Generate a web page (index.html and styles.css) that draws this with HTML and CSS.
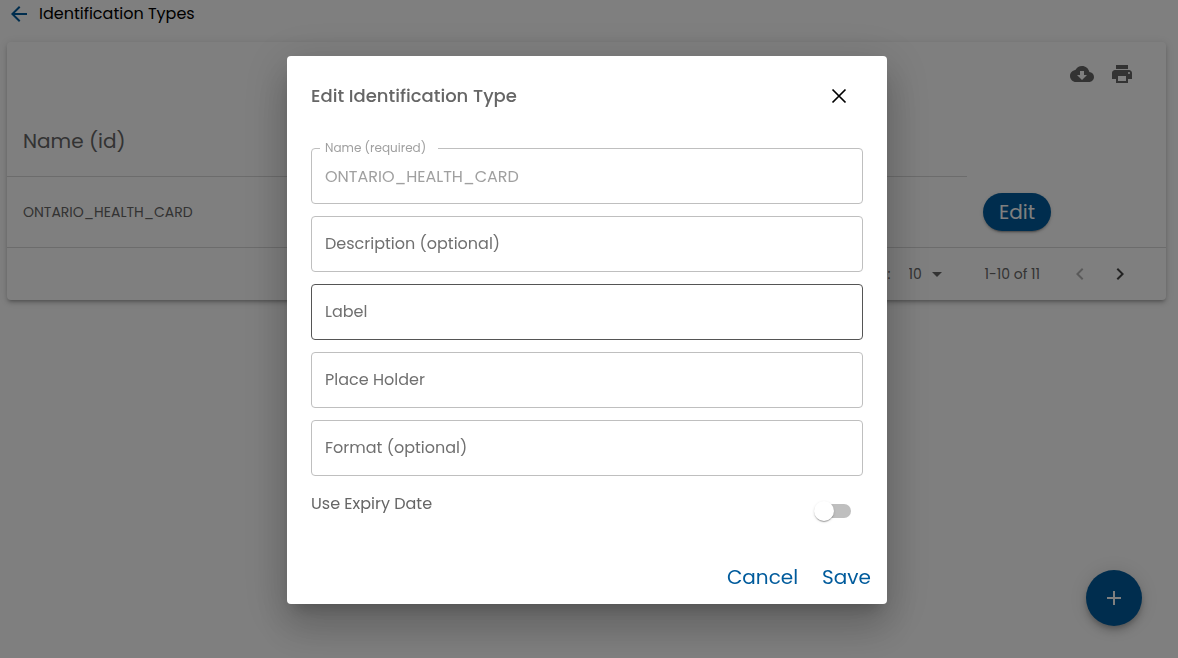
FILE: index.html
```html
<!DOCTYPE html>
<html lang="en">
<head>
<meta charset="utf-8">
<meta name="viewport" content="width=device-width, initial-scale=1">
<title>Identification Types</title>
<link rel="stylesheet" href="styles.css">
</head>
<body>
<header class="page-header">
  <a class="back" href="#" aria-label="Back"><svg class="icon" viewBox="0 0 24 24"><path d="M20 11H7.830l5.590-5.590L12 4l-8 8 8 8 1.410-1.410L7.830 13H20v-2z"/></svg></a>
  <h1 class="page-title">Identification Types</h1>
</header>

<main class="card">
  <div class="toolbar">
    <button class="icon-button" type="button" aria-label="Download"><svg class="icon" viewBox="0 0 24 24"><path d="M19.350 10.040C18.670 6.590 15.640 4 12 4 9.110 4 6.600 5.640 5.350 8.040 2.340 8.360 0 10.910 0 14c0 3.310 2.690 6 6 6h13c2.760 0 5-2.240 5-5 0-2.640-2.050-4.780-4.650-4.960zM17 13l-5 5-5-5h3V9h4v4h3z"/></svg></button>
    <button class="icon-button" type="button" aria-label="Print"><svg class="icon" viewBox="0 0 24 24"><path d="M19 8H5c-1.660 0-3 1.340-3 3v6h4v4h12v-4h4v-6c0-1.660-1.340-3-3-3zm-3 11H8v-5h8v5zm3-7c-.55 0-1-.45-1-1s.45-1 1-1 1 .45 1 1-.45 1-1 1zm-1-9H6v4h12V3z"/></svg></button>
  </div>
  <table class="table">
    <thead>
      <tr><th class="name-head" scope="col">Name (id)</th><td class="action-head"></td></tr>
    </thead>
    <tbody>
      <tr><td>ONTARIO_HEALTH_CARD</td><td><button class="edit-button" type="button">Edit</button></td></tr>
    </tbody>
  </table>
  <div class="pagination">
    <label for="rows">Rows per page:</label>
    <div class="select-wrap">
      <select id="rows" class="rows-select"><option>10</option><option>25</option></select>
      <svg class="icon select-arrow" viewBox="0 0 24 24"><path d="M7 10l5 5 5-5z"/></svg>
    </div>
    <span class="range">1-10 of 11</span>
    <div class="pager">
      <button class="icon-button" type="button" aria-label="Previous page" disabled><svg class="icon" viewBox="0 0 24 24"><path d="M15.410 7.410L14 6l-6 6 6 6 1.410-1.410L10.830 12z"/></svg></button>
      <button class="icon-button" type="button" aria-label="Next page"><svg class="icon" viewBox="0 0 24 24"><path d="M10 6L8.590 7.410 13.170 12l-4.580 4.590L10 18l6-6z"/></svg></button>
    </div>
  </div>
</main>

<button class="fab" type="button" aria-label="Add"><svg class="icon" viewBox="0 0 24 24"><path d="M19 13h-6v6h-2v-6H5v-2h6V5h2v6h6v2z"/></svg></button>

<div class="backdrop">
  <form class="dialog" role="dialog" aria-labelledby="dialog-title">
    <div class="dialog-header">
      <h2 class="dialog-title" id="dialog-title">Edit Identification Type</h2>
      <button class="close" type="button" aria-label="Close"><svg class="icon" viewBox="0 0 24 24"><path d="M5.500 5.500l13 13m0-13l-13 13" fill="none" stroke="currentColor" stroke-width="1.700"/></svg></button>
    </div>
    <div class="dialog-body">
      <div class="field filled">
        <input class="field-input" id="name" type="text" value="ONTARIO_HEALTH_CARD" disabled>
        <label class="field-label" for="name">Name (required)</label>
      </div>
      <div class="field">
        <input class="field-input" id="description" type="text">
        <label class="field-label" for="description">Description (optional)</label>
      </div>
      <div class="field active">
        <input class="field-input" id="label" type="text">
        <label class="field-label" for="label">Label</label>
      </div>
      <div class="field">
        <input class="field-input" id="placeholder" type="text">
        <label class="field-label" for="placeholder">Place Holder</label>
      </div>
      <div class="field">
        <input class="field-input" id="format" type="text">
        <label class="field-label" for="format">Format (optional)</label>
      </div>
      <div class="switch-row">
        <label for="expiry">Use Expiry Date</label>
        <input class="switch" id="expiry" type="checkbox" role="switch">
      </div>
    </div>
    <div class="dialog-actions">
      <button class="text-button" type="button">Cancel</button>
      <button class="text-button" type="submit">Save</button>
    </div>
  </form>
</div>
</body>
</html>
```

FILE: styles.css
```css
* {
  box-sizing: border-box;
}

body {
  margin: 0;
  min-height: 100vh;
  background: #fefefe;
  color: #666;
  font-family: Poppins, Inter, sans-serif;
  font-size: 16px;
  line-height: 24px;
}

button,
input,
select {
  margin: 0;
  font: inherit;
  color: inherit;
}

button {
  display: flex;
  align-items: center;
  justify-content: center;
  padding: 0;
  border: 0;
  background: none;
  cursor: pointer;
}

.icon {
  display: block;
  width: 24px;
  height: 24px;
  fill: currentColor;
}

.page-header {
  display: flex;
  align-items: center;
  gap: 8px;
  height: 28px;
  padding-left: 7px;
}

.back {
  color: #005b9c;
}

.page-title {
  margin: 0;
  color: #000;
  font-size: 16px;
  font-weight: 400;
}

.card {
  margin: 14px 12px 0 7px;
  border-radius: 4px;
  background: #fff;
  box-shadow: 0 3px 3px -2px rgba(0, 0, 0, .2), 0 3px 4px rgba(0, 0, 0, .14), 0 1px 8px rgba(0, 0, 0, .12);
}

.toolbar {
  display: flex;
  justify-content: flex-end;
  height: 64px;
  padding-right: 24px;
}

.icon-button {
  width: 40px;
  height: 64px;
}

.table {
  width: 100%;
  border-collapse: separate;
  border-spacing: 0;
  table-layout: fixed;
  font-size: 14px;
}

.table th,
.table td {
  height: 71px;
  padding: 0 16px;
  border-bottom: 1px solid #d8d8d8;
  text-align: left;
}

.table .name-head {
  font-size: 20px;
  font-weight: 400;
}

.table .action-head {
  width: 199px;
  border-bottom: 0;
}

.edit-button {
  height: 38px;
  padding: 0 16px;
  border-radius: 19px;
  background: #005b9c;
  color: #fff;
  font-size: 20px;
  box-shadow: 0 3px 1px -2px rgba(0, 0, 0, .2), 0 2px 2px rgba(0, 0, 0, .14), 0 1px 5px rgba(0, 0, 0, .12);
}

.pagination {
  display: flex;
  align-items: center;
  justify-content: flex-end;
  height: 52px;
  padding-right: 26px;
  font-size: 14px;
}

.select-wrap {
  position: relative;
  margin-left: 18px;
}

.rows-select {
  display: block;
  width: 40px;
  padding: 0;
  border: 0;
  background: none;
  appearance: none;
}

.select-arrow {
  position: absolute;
  top: 0;
  right: 0;
  pointer-events: none;
}

.range {
  margin-left: 36px;
}

.pager {
  display: flex;
  margin-left: 20px;
}

.pager .icon-button {
  height: 40px;
  color: #444;
}

.pager .icon-button:disabled {
  color: #b5b5b5;
}

.fab {
  position: fixed;
  right: 36px;
  bottom: 32px;
  width: 56px;
  height: 56px;
  border-radius: 50%;
  background: #005b9c;
  color: #fff;
  box-shadow: 0 3px 5px -1px rgba(0, 0, 0, .2), 0 6px 10px rgba(0, 0, 0, .14), 0 1px 18px rgba(0, 0, 0, .12);
}

.backdrop {
  position: fixed;
  inset: 0;
  display: flex;
  align-items: center;
  justify-content: center;
  padding: 2px 4px 0 0;
  background: rgba(0, 0, 0, .5);
}

.dialog {
  width: 100%;
  max-width: 600px;
  border-radius: 4px;
  background: #fff;
  box-shadow: 0 11px 15px -7px rgba(0, 0, 0, .2), 0 24px 38px 3px rgba(0, 0, 0, .14), 0 9px 46px 8px rgba(0, 0, 0, .12);
}

.dialog-header {
  display: flex;
  align-items: center;
  justify-content: space-between;
  height: 80px;
  padding: 0 24px;
}

.dialog-title {
  margin: 0;
  font-size: 18px;
  font-weight: 500;
}

.close {
  width: 48px;
  height: 48px;
  color: #000;
}

.dialog-body {
  display: flex;
  flex-direction: column;
  gap: 12px;
  padding: 12px 24px 20px;
}

.field {
  position: relative;
}

.field-input {
  display: block;
  width: 100%;
  height: 56px;
  padding: 0 13px;
  border: 1px solid #bfbfbf;
  border-radius: 4px;
  outline: 0;
  background: #fff;
}

.field-input:disabled {
  color: #a0a0a0;
}

.active .field-input {
  border-color: #555;
}

.field-label {
  position: absolute;
  top: 16px;
  left: 14px;
  color: #707070;
}

.filled .field-label {
  top: -8px;
  left: 9px;
  padding: 0 12px 0 5px;
  background: #fff;
  color: #a0a0a0;
  font-size: 12px;
  line-height: 16px;
}

.switch-row {
  display: flex;
  align-items: flex-start;
  justify-content: space-between;
  margin-top: 4px;
}

.switch {
  width: 34px;
  height: 14px;
  margin: 12px;
  border-radius: 7px;
  background: #bfbfbf;
  appearance: none;
}

.switch::before {
  content: "";
  display: block;
  width: 20px;
  height: 20px;
  margin: -3px;
  border-radius: 50%;
  background: #fff;
  box-shadow: 0 2px 1px -1px rgba(0, 0, 0, .2), 0 1px 1px rgba(0, 0, 0, .14), 0 1px 3px rgba(0, 0, 0, .12);
}

.dialog-actions {
  display: flex;
  justify-content: flex-end;
  gap: 8px;
  padding: 8px;
}

.text-button {
  height: 38px;
  padding: 0 8px;
  color: #005b9c;
  font-size: 20px;
}
```
